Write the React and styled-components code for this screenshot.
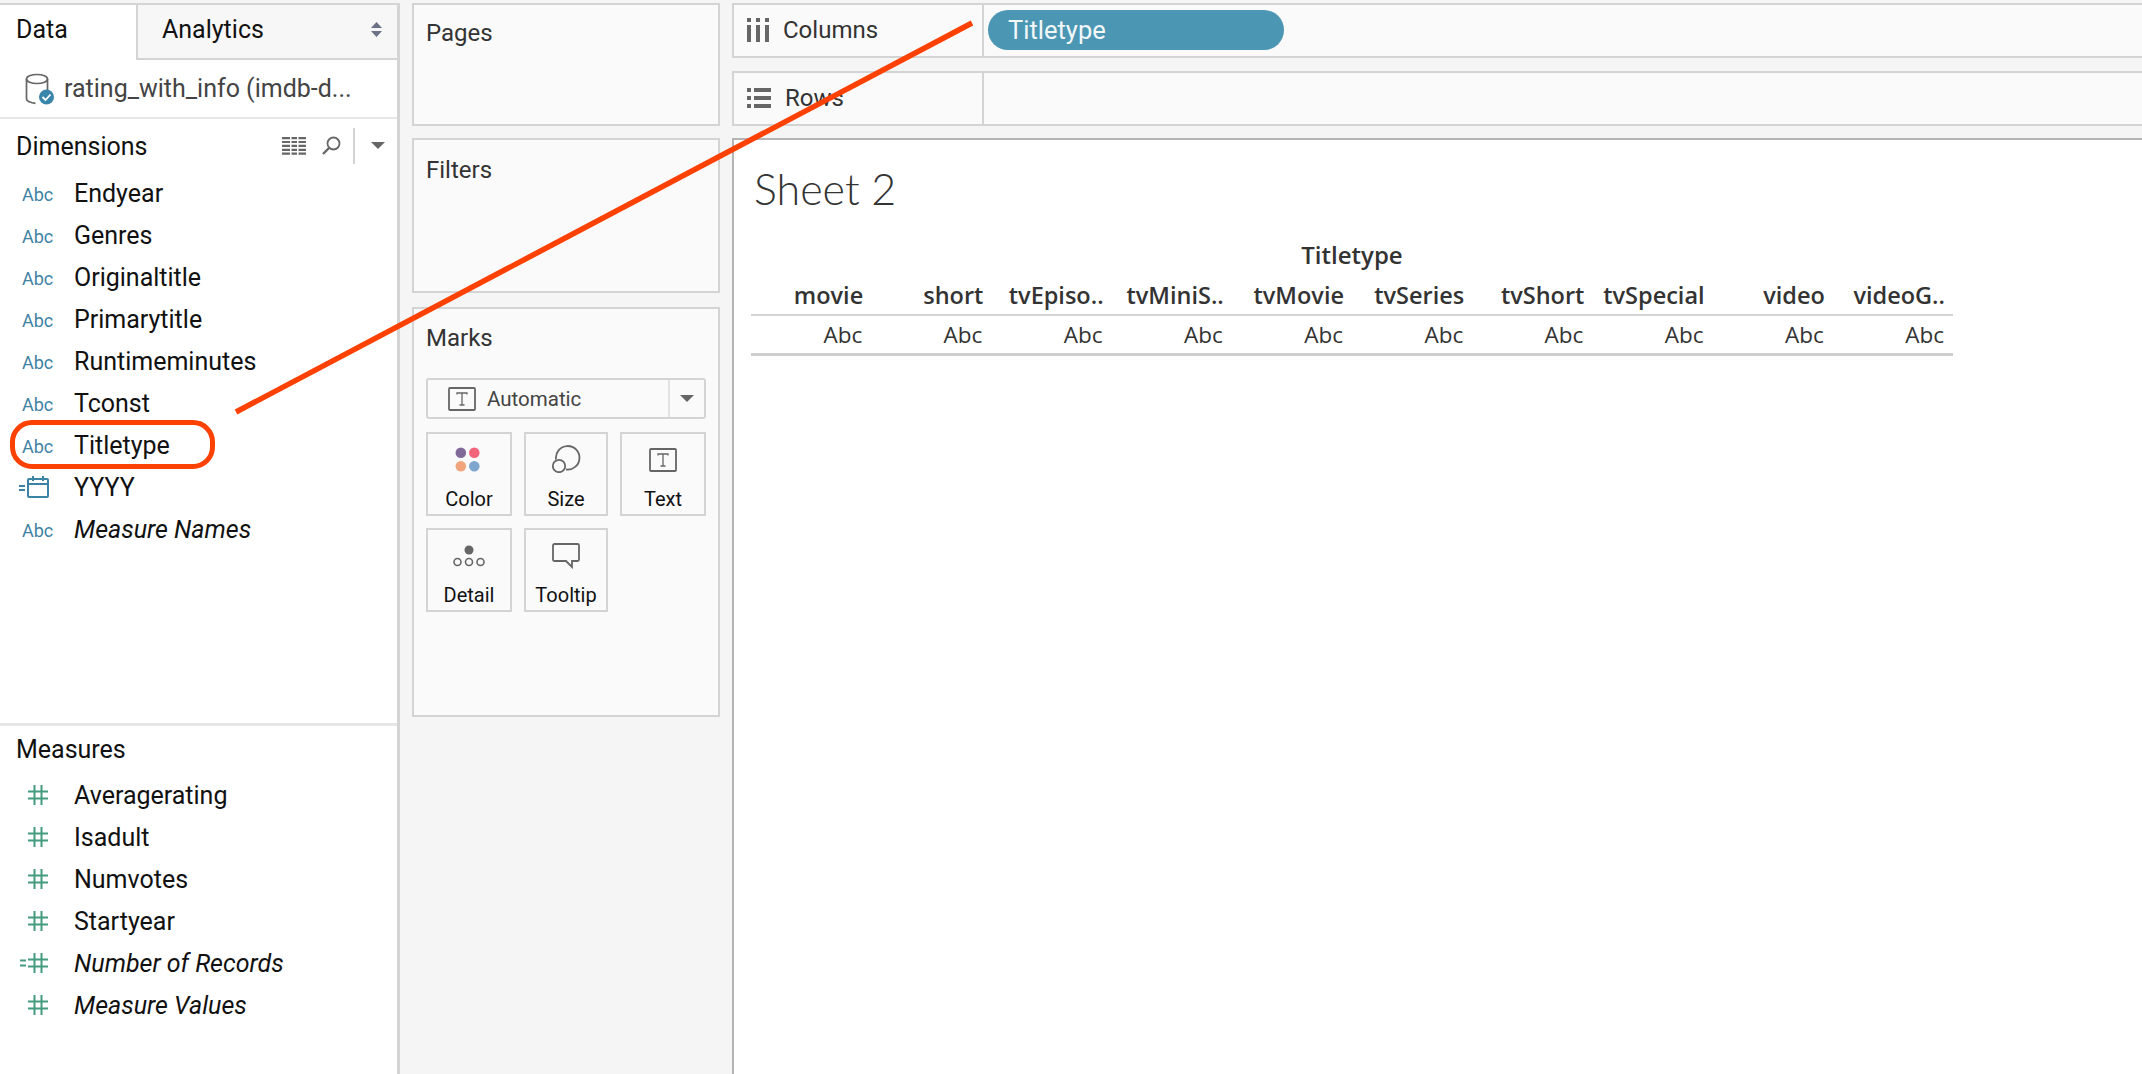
import React from "react";
import styled, { createGlobalStyle } from "styled-components";

const dimensions = [
  { name: "Endyear" },
  { name: "Genres" },
  { name: "Originaltitle" },
  { name: "Primarytitle" },
  { name: "Runtimeminutes" },
  { name: "Tconst" },
  { name: "Titletype", circled: true },
  { name: "YYYY", date: true },
  { name: "Measure Names", italic: true },
];

const measures = [
  { name: "Averagerating" },
  { name: "Isadult" },
  { name: "Numvotes" },
  { name: "Startyear" },
  { name: "Number of Records", italic: true, calc: true },
  { name: "Measure Values", italic: true },
];

const columns = ["movie", "short", "tvEpiso..", "tvMiniS..", "tvMovie", "tvSeries", "tvShort", "tvSpecial", "video", "videoG.."];

const HashIcon = ({ calc }) => (
  <svg width="32" height="20" viewBox="0 0 32 20" fill="none" stroke="#459b7f" strokeWidth="2">
    <path d="M12 6.500h20M12 13.500h20M18.500 0v20M25.500 0v20" />
    {calc && <path d="M4 7.500h6M4 12.500h6" />}
  </svg>
);

const CalendarIcon = () => (
  <svg width="30" height="22" viewBox="0 0 30 22" fill="none" stroke="#3c82a5" strokeWidth="2">
    <path d="M0 10h6M0 14h6" />
    <rect x="9" y="3" width="20" height="18" rx="1" />
    <path d="M9 8h20M14 0v5M24 0v5" />
  </svg>
);

const DatabaseIcon = () => (
  <svg width="30" height="32" viewBox="0 0 30 32">
    <g fill="none" stroke="#666" strokeWidth="1.700">
      <ellipse cx="12" cy="6" rx="10.500" ry="4.500" />
      <path d="M1.500 6v20c0 2 4 4 9 4.300M22.500 6v11" />
    </g>
    <circle cx="21.500" cy="24" r="7.500" fill="#3a86ab" />
    <path d="M17.500 24l3 3 5-5.500" fill="none" stroke="#fff" strokeWidth="1.800" />
  </svg>
);

const ListIcon = () => (
  <svg width="24" height="18" viewBox="0 0 24 18" fill="#666">
    {[0, 3.9, 7.800, 11.700, 15.600].map((y) => (
      <path key={y} d={`M0 ${y}h8v2.200H0zM9.500 ${y}h5.500v2.200H9.500zM16.500 ${y}h7.500v2.200h-7.500z`} />
    ))}
  </svg>
);

const SearchIcon = () => (
  <svg width="19" height="19" viewBox="0 0 19 19" fill="none" stroke="#666" strokeWidth="1.800">
    <circle cx="11.500" cy="7.500" r="6" />
    <path d="M7 12l-6 6" strokeWidth="2.400" />
  </svg>
);

const Caret = ({ size = 14 }) => (
  <svg width={size} height={size / 2} viewBox="0 0 14 7" fill="#666">
    <path d="M0 0h14L7 7z" />
  </svg>
);

const SortIcon = () => (
  <svg width="11" height="15" viewBox="0 0 11 15" fill="#6b7285">
    <path d="M5.500 0L11 6H0zM0 9h11l-5.500 6z" />
  </svg>
);

const ColumnsIcon = () => (
  <svg width="22" height="24" viewBox="0 0 22 24" fill="#666">
    <path d="M0 0h4v4H0zM9 0h4v4H9zM18 0h4v4h-4zM0 7h4v17H0zM9 7h4v17H9zM18 7h4v17h-4z" />
  </svg>
);

const RowsIcon = () => (
  <svg width="24" height="20" viewBox="0 0 24 20" fill="#666">
    <path d="M0 0h4v4H0zM7 0h17v4H7zM0 8h4v4H0zM7 8h17v4H7zM0 16h4v4H0zM7 16h17v4H7z" />
  </svg>
);

const TextIcon = () => (
  <svg width="28" height="24" viewBox="0 0 28 24" fill="none">
    <rect x="1" y="1" width="26" height="22" rx="1" stroke="#666" strokeWidth="1.800" />
    <path d="M9 7.500V6h10v1.500M14 6v12M11.500 18h5" stroke="#666" strokeWidth="1.300" />
  </svg>
);

const ColorIcon = () => (
  <svg width="28" height="25" viewBox="0 0 29 26">
    <circle cx="6" cy="6" r="5.500" fill="#7f6a99" />
    <circle cx="20" cy="6" r="5.500" fill="#f2637c" />
    <circle cx="6" cy="20" r="5.500" fill="#f0a57c" />
    <circle cx="20" cy="20" r="5.500" fill="#7ea6cf" />
  </svg>
);

const SizeIcon = () => (
  <svg width="30" height="28" viewBox="0 0 30 28" fill="none" stroke="#666" strokeWidth="1.800">
    <path d="M5 14.500A11.800 11.800 0 1 1 15 24.500" />
    <circle cx="8" cy="21" r="6.200" />
  </svg>
);

const DetailIcon = () => (
  <svg width="32" height="24" viewBox="0 0 32 24" fill="none" stroke="#666" strokeWidth="1.600">
    <circle cx="16" cy="5" r="4.500" fill="#666" stroke="none" />
    <circle cx="4.500" cy="17" r="3.500" />
    <circle cx="16" cy="17" r="3.500" />
    <circle cx="27.500" cy="17" r="3.500" />
  </svg>
);

const TooltipIcon = () => (
  <svg width="28" height="26" viewBox="0 0 28 26" fill="none" stroke="#666" strokeWidth="1.800">
    <path d="M2.500 1h23a1.500 1.500 0 0 1 1.500 1.500v14a1.500 1.500 0 0 1-1.500 1.500H20v6l-6-6H2.500A1.500 1.500 0 0 1 1 16.500v-14A1.500 1.500 0 0 1 2.500 1z" />
  </svg>
);

const markCards = [
  { label: "Color", icon: <ColorIcon />, top: 13 },
  { label: "Size", icon: <SizeIcon />, top: 11 },
  { label: "Text", icon: <TextIcon />, top: 14 },
  { label: "Detail", icon: <DetailIcon />, top: 15 },
  { label: "Tooltip", icon: <TooltipIcon />, top: 13 },
];

const App = () => {
  return (
    <>
      <GlobalStyle />
      <Page>
        <Sidebar>
          <Tabs>
            <DataTab>Data</DataTab>
            <AnalyticsTab>
              Analytics
              <SortIcon />
            </AnalyticsTab>
          </Tabs>
          <Source>
            <DatabaseIcon />
            <span>rating_with_info (imdb-d...</span>
          </Source>
          <DimensionsHeader>
            <SectionTitle>Dimensions</SectionTitle>
            <HeaderTools>
              <ListIcon />
              <SearchIcon />
              <ToolDivider />
              <Caret />
            </HeaderTools>
          </DimensionsHeader>
          <DimensionList>
            {dimensions.map((f) => (
              <FieldRow key={f.name}>
                <FieldIcon $date={f.date}>{f.date ? <CalendarIcon /> : <AbcType>Abc</AbcType>}</FieldIcon>
                <FieldName $italic={f.italic}>{f.name}</FieldName>
                {f.circled && <Circled />}
              </FieldRow>
            ))}
          </DimensionList>
          <MeasuresHeader>
            <SectionTitle>Measures</SectionTitle>
          </MeasuresHeader>
          <div>
            {measures.map((f) => (
              <FieldRow key={f.name}>
                <FieldIcon>
                  <HashIcon calc={f.calc} />
                </FieldIcon>
                <FieldName $italic={f.italic}>{f.name}</FieldName>
              </FieldRow>
            ))}
          </div>
        </Sidebar>

        <MiddleColumn>
          <PagesCard>
            <CardTitle>Pages</CardTitle>
          </PagesCard>
          <FiltersCard>
            <CardTitle>Filters</CardTitle>
          </FiltersCard>
          <MarksCard>
            <CardTitle>Marks</CardTitle>
            <MarkSelect>
              <MarkValue>
                <TextIcon />
                Automatic
              </MarkValue>
              <MarkArrow>
                <Caret />
              </MarkArrow>
            </MarkSelect>
            <MarkGrid>
              {markCards.map((c) => (
                <MarkButton key={c.label}>
                  <MarkIcon $top={c.top}>{c.icon}</MarkIcon>
                  {c.label}
                </MarkButton>
              ))}
            </MarkGrid>
          </MarksCard>
        </MiddleColumn>

        <Workspace>
          <Shelf>
            <ShelfLabel>
              <ColumnsIcon />
              Columns
            </ShelfLabel>
            <ShelfBody>
              <Pill>Titletype</Pill>
            </ShelfBody>
          </Shelf>
          <Shelf>
            <ShelfLabel>
              <RowsIcon />
              Rows
            </ShelfLabel>
            <ShelfBody />
          </Shelf>
          <Canvas>
            <SheetTitle>Sheet 2</SheetTitle>
            <Table>
              <TableCaption>Titletype</TableCaption>
              <HeadRow>
                {columns.map((c) => (
                  <HeadCell key={c}>{c}</HeadCell>
                ))}
              </HeadRow>
              <BodyRow>
                {columns.map((c) => (
                  <BodyCell key={c}>Abc</BodyCell>
                ))}
              </BodyRow>
            </Table>
          </Canvas>
        </Workspace>

        <Arrow viewBox="0 0 2142 1074">
          <line x1="236" y1="412" x2="972" y2="23" stroke="#fc4102" strokeWidth="5.500" />
        </Arrow>
      </Page>
    </>
  );
};

const GlobalStyle = createGlobalStyle`
  html, body {
    margin: 0;
    padding: 0;
    background: #f5f5f5;
  }
  * {
    box-sizing: border-box;
  }
`;

const Page = styled.div`
  position: relative;
  width: 2142px;
  height: 1074px;
  padding-top: 3px;
  display: flex;
  overflow: hidden;
  font-family: Roboto, "Liberation Sans", sans-serif;
  font-size: 25px;
  color: #111;
`;

const Sidebar = styled.aside`
  width: 400px;
  flex-shrink: 0;
  display: flex;
  flex-direction: column;
  background: #fff;
  border-top: 2px solid #d4d4d4;
  border-right: 3px solid #d4d4d4;
`;

const Tabs = styled.div`
  display: flex;
  height: 55px;
`;

const DataTab = styled.div`
  width: 138px;
  padding: 0 0 6px 16px;
  display: flex;
  align-items: center;
  border-right: 2px solid #d4d4d4;
`;

const AnalyticsTab = styled.div`
  flex: 1;
  display: flex;
  align-items: center;
  justify-content: space-between;
  padding: 0 15px 4px 24px;
  background: #f7f7f7;
  border-bottom: 2px solid #d4d4d4;
`;

const Source = styled.div`
  height: 59px;
  display: flex;
  align-items: center;
  gap: 9px;
  padding: 0 0 0 25px;
  color: #444;
  border-bottom: 2px solid #e6e6e6;
`;

const DimensionsHeader = styled.div`
  height: 53px;
  display: flex;
  align-items: center;
  justify-content: space-between;
  padding: 0 12px 0 16px;
`;

const MeasuresHeader = styled.div`
  height: 51px;
  display: flex;
  align-items: center;
  padding: 0 16px 4px;
  border-top: 3px solid #e6e6e6;
`;

const SectionTitle = styled.div`
  margin-top: 2px;
  font-size: 25px;
`;

const HeaderTools = styled.div`
  display: flex;
  align-items: center;
  gap: 16px;
`;

const ToolDivider = styled.div`
  width: 2px;
  height: 36px;
  margin-left: -4px;
  background: #d4d4d4;
`;

const DimensionList = styled.div`
  flex: none;
  height: 551px;
`;

const FieldRow = styled.div`
  position: relative;
  height: 42px;
  display: flex;
  align-items: center;
`;

const FieldIcon = styled.div`
  width: 74px;
  padding-left: ${(props) => (props.$date ? "19px" : "16px")};
  flex-shrink: 0;
  display: flex;
  align-items: center;
`;

const AbcType = styled.span`
  margin: 2px 0 0 6px;
  font-size: 18px;
  color: #3f83a3;
`;

const FieldName = styled.span`
  font-style: ${(props) => (props.$italic ? "italic" : "normal")};
`;

const Circled = styled.div`
  position: absolute;
  left: 10px;
  top: -4px;
  width: 205px;
  height: 49px;
  border: 5px solid #fc4102;
  border-radius: 22px;
`;

const MiddleColumn = styled.div`
  width: 308px;
  margin-left: 12px;
  flex-shrink: 0;
  display: flex;
  flex-direction: column;
`;

const Card = styled.section`
  background: #fafafa;
  border: 2px solid #d4d4d4;
  padding: 14px 12px;
  font-size: 24px;
  color: #333;
`;

const PagesCard = styled(Card)`
  height: 123px;
  margin-bottom: 12px;
  padding-top: 13px;
`;

const FiltersCard = styled(Card)`
  height: 155px;
  margin-bottom: 14px;
  padding-top: 15px;
`;

const MarksCard = styled(Card)`
  height: 410px;
`;

const CardTitle = styled.h3`
  margin: 0;
  font-size: 24px;
  line-height: 30px;
  font-weight: 400;
`;

const MarkSelect = styled.div`
  height: 41px;
  margin-top: 25px;
  display: flex;
  border: 2px solid #d4d4d4;
  border-radius: 3px;
`;

const MarkValue = styled.div`
  flex: 1;
  display: flex;
  align-items: center;
  gap: 11px;
  padding-left: 20px;
  font-size: 20.500px;
  color: #444;
`;

const MarkArrow = styled.div`
  width: 36px;
  display: flex;
  align-items: center;
  justify-content: center;
  border-left: 2px solid #e2e2e2;
`;

const MarkGrid = styled.div`
  display: grid;
  grid-template-columns: 86px 84px 86px;
  grid-auto-rows: 84px;
  gap: 12px;
  margin-top: 13px;
`;

const MarkButton = styled.div`
  display: flex;
  flex-direction: column;
  align-items: center;
  border: 2px solid #d4d4d4;
  font-size: 20px;
  color: #111;
`;

const MarkIcon = styled.div`
  height: 53px;
  padding-top: ${(props) => props.$top}px;
  display: flex;
  justify-content: center;
`;

const Workspace = styled.main`
  flex: 1;
  margin-left: 12px;
  min-width: 0;
  display: flex;
  flex-direction: column;
  gap: 12px;
`;

const Shelf = styled.div`
  height: 55px;
  display: flex;
  background: #fafafa;
  border: 2px solid #d4d4d4;
  border-right: none;
  &:first-child {
    margin-bottom: 1px;
  }
`;

const ShelfLabel = styled.div`
  width: 250px;
  display: flex;
  align-items: center;
  gap: 14px;
  padding: 0 0 1px 13px;
  font-size: 24px;
  color: #333;
  border-right: 2px solid #d4d4d4;
`;

const ShelfBody = styled.div`
  flex: 1;
  display: flex;
  align-items: center;
  padding: 0 0 2px 4px;
`;

const Pill = styled.div`
  width: 296px;
  height: 40px;
  display: flex;
  align-items: center;
  padding-left: 20px;
  border-radius: 20px;
  background: #4b96b3;
  color: #f2f7f9;
  font-size: 25.500px;
`;

const Canvas = styled.div`
  flex: 1;
  background: #fff;
  border-top: 2px solid #b4b4b4;
  border-left: 2px solid #b4b4b4;
  padding-left: 17px;
`;

const SheetTitle = styled.h1`
  margin: 24px 0 0 3px;
  font-size: 43px;
  line-height: 50px;
  font-weight: 300;
  color: #333;
  font-family: Lato, Roboto, sans-serif;
`;

const Table = styled.div`
  width: 1202px;
  margin-top: 19px;
  font-family: "Open Sans", sans-serif;
  font-size: 22.500px;
  color: #333;
`;

const TableCaption = styled.div`
  height: 42px;
  display: flex;
  align-items: center;
  justify-content: center;
  font-size: 24px;
  font-weight: 600;
`;

const HeadRow = styled.div`
  display: grid;
  grid-template-columns: repeat(10, 1fr);
  height: 41px;
  align-items: center;
  border-bottom: 2px solid #d4d4d4;
`;

const HeadCell = styled.div`
  padding-right: 8px;
  text-align: right;
  font-size: 23.500px;
  font-weight: 600;
  white-space: nowrap;
`;

const BodyRow = styled.div`
  display: grid;
  grid-template-columns: repeat(10, 1fr);
  height: 40px;
  align-items: center;
  border-bottom: 3px solid #cfcfcf;
`;

const BodyCell = styled.div`
  padding-right: 9px;
  text-align: right;
`;

const Arrow = styled.svg`
  position: absolute;
  inset: 0;
  width: 2142px;
  height: 1074px;
  pointer-events: none;
`;

export default App;
